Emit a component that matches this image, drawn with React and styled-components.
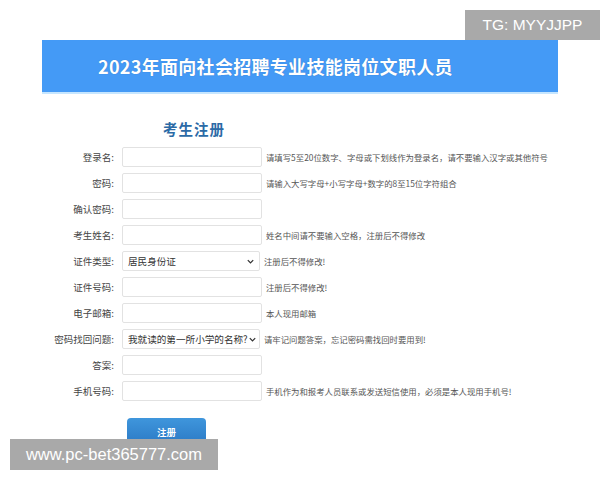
import React from 'react';
import styled, { createGlobalStyle } from 'styled-components';

const fields = [
    { label: '登录名:', hint: '请填写5至20位数字、字母或下划线作为登录名，请不要输入汉字或其他符号' },
    { label: '密码:', hint: '请输入大写字母+小写字母+数字的8至15位字符组合' },
    { label: '确认密码:', hint: '' },
    { label: '考生姓名:', hint: '姓名中间请不要输入空格，注册后不得修改' },
    { label: '证件类型:', select: '居民身份证', hint: '注册后不得修改!' },
    { label: '证件号码:', hint: '注册后不得修改!' },
    { label: '电子邮箱:', hint: '本人现用邮箱' },
    { label: '密码找回问题:', select: '我就读的第一所小学的名称?', hint: '请牢记问题答案，忘记密码需找回时要用到!' },
    { label: '答案:', hint: '' },
    { label: '手机号码:', hint: '手机作为和报考人员联系或发送短信使用，必须是本人现用手机号!' },
];

const App = () => {
    return(
        <Page>
            <GlobalStyle />
            <Banner>
                <BannerTitle>2023年面向社会招聘专业技能岗位文职人员</BannerTitle>
            </Banner>
            <FormTitle>考生注册</FormTitle>
            <Form>
                {fields.map((f) => (
                    <Row key={f.label}>
                        <Label>{f.label}</Label>
                        {f.select
                            ? <Select>
                                <span>{f.select}</span>
                                <Chevron viewBox="0 0 10 10">
                                    <path d="M2 3.5 L5 6.5 L8 3.5" />
                                </Chevron>
                              </Select>
                            : <Input />}
                        <Hint $tight={!!f.select}>{f.hint}</Hint>
                    </Row>
                ))}
            </Form>
            <Submit>注册</Submit>
            <TgBadge>TG: MYYJJPP</TgBadge>
            <Watermark>www.pc-bet365777.com</Watermark>
        </Page>
    )
}

const GlobalStyle = createGlobalStyle`
    body {
        margin: 0;
        background: #ffffff;
        font-family: "Noto Sans CJK SC", "Liberation Sans", sans-serif;
    }
`;

const Page = styled.div`
    position: relative;
    width: 600px;
    height: 480px;
    overflow: hidden;
    padding-top: 40px;
    box-sizing: border-box;
`;

const Banner = styled.div`
    margin: 0 42px;
    height: 52px;
    background-color: #449af6;
    border-bottom: 2px solid #c6e6ff;
    display: flex;
    align-items: center;
    padding-left: 56px;
`;

const BannerTitle = styled.div`
    color: #ffffff;
    font-size: 18px;
    font-weight: 700;
    letter-spacing: 0.3px;
    text-shadow: 0 0 1px rgba(0, 40, 90, 0.35);
`;

const FormTitle = styled.div`
    margin: 25px 0 0 163px;
    font-size: 14.5px;
    font-weight: 700;
    color: #2b6aa6;
    letter-spacing: 1px;
    line-height: 20px;
`;

const Form = styled.div`
    margin-top: 8px;
    display: flex;
    flex-direction: column;
    gap: 6px;
`;

const Row = styled.div`
    display: flex;
    align-items: center;
    height: 20px;
`;

const Label = styled.div`
    flex-shrink: 0;
    width: 122px;
    text-align: right;
    padding-right: 8px;
    box-sizing: border-box;
    font-size: 9.5px;
    color: #444444;
`;

const Input = styled.div`
    flex-shrink: 0;
    width: 140px;
    height: 20px;
    box-sizing: border-box;
    border: 1px solid #e2e2e2;
    border-radius: 2px;
    background: #ffffff;
`;

const Select = styled.div`
    flex-shrink: 0;
    width: 138px;
    height: 20px;
    box-sizing: border-box;
    border: 1px solid #e2e2e2;
    border-radius: 2px;
    display: flex;
    align-items: center;
    justify-content: space-between;
    padding: 0 4px 0 5px;
    font-size: 9.6px;
    color: #333333;
    white-space: nowrap;
`;

const Chevron = styled.svg`
    flex-shrink: 0;
    width: 9px;
    height: 9px;
    fill: none;
    stroke: #333333;
    stroke-width: 1.4;
`;

const Hint = styled.div`
    margin-left: ${({ $tight }) => ($tight ? '4px' : '4px')};
    font-size: 8.4px;
    color: #555555;
    white-space: nowrap;
`;

const Submit = styled.button`
    display: block;
    margin: 17px 0 0 127px;
    width: 79px;
    height: 28px;
    border: none;
    border-radius: 4px;
    background: linear-gradient(#3f96dc, #2a78c4);
    color: #ffffff;
    font-family: "Noto Sans CJK SC", sans-serif;
    font-size: 9.5px;
    font-weight: 700;
`;

const TgBadge = styled.div`
    position: absolute;
    top: 10px;
    right: 0;
    width: 135px;
    height: 30px;
    background: #a9a9a9;
    color: #ffffff;
    font-family: "Liberation Sans", sans-serif;
    font-size: 15.5px;
    display: flex;
    align-items: center;
    justify-content: center;
`;

const Watermark = styled.div`
    position: absolute;
    left: 10px;
    top: 439px;
    width: 208px;
    height: 31px;
    background: #a9a9a9;
    color: #ffffff;
    font-family: "Liberation Sans", sans-serif;
    font-size: 16.5px;
    display: flex;
    align-items: center;
    justify-content: center;
`;

export default App
